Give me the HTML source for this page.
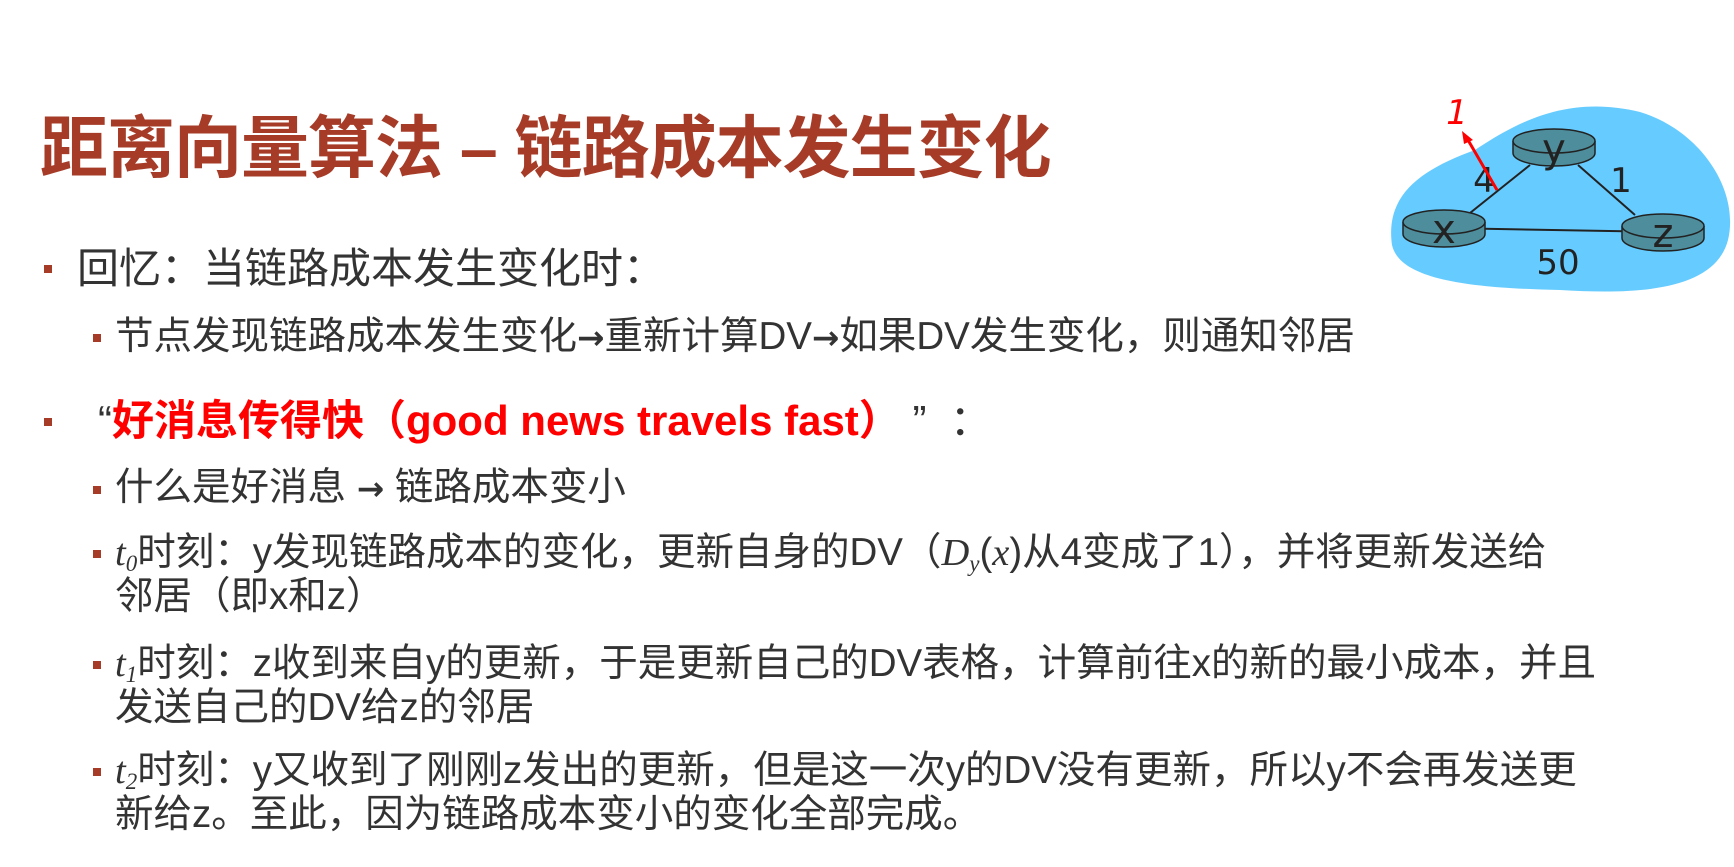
<!DOCTYPE html>
<html><head><meta charset="utf-8"><style>
body{margin:0;width:1734px;height:867px;background:#fff;position:relative;overflow:hidden;font-family:"Liberation Sans","Noto Sans CJK SC",sans-serif;color:#333}
.t{position:absolute;left:40px;top:93px;font-size:68px;font-weight:bold;color:#A63C28;white-space:nowrap;letter-spacing:-1px}
.l{position:absolute;white-space:nowrap;font-size:42px;line-height:44px}
.b{position:absolute;width:8px;height:8px;background:#A63C28}
.s{font-size:38.5px}
i{font-family:"Liberation Serif",serif}
sub{font-size:23px;font-style:italic;font-family:"Liberation Serif",serif;vertical-align:-6px;line-height:0}
.a{font-family:"DejaVu Sans",sans-serif;font-weight:bold;font-size:0.85em}
</style></head><body>
<div class="t">距离向量算法 – 链路成本发生变化</div>

<div class="b" style="left:44px;top:265px"></div>
<div class="l" style="left:77px;top:247px">回忆：当链路成本发生变化时：</div>
<div class="b" style="left:93px;top:334px"></div>
<div class="l s" style="left:115px;top:315px">节点发现链路成本发生变化<span class="a">→</span>重新计算DV<span class="a">→</span>如果DV发生变化，则通知邻居</div>

<div class="b" style="left:44px;top:418px"></div>
<div class="l" style="left:98px;top:399px"><span>“</span><b style="color:#f00">好消息传得快（good news travels fast）</b>&nbsp;”&nbsp;&nbsp;：</div>
<div class="b" style="left:93px;top:486px"></div>
<div class="l s" style="left:115px;top:466px">什么是好消息 <span class="a">→</span> 链路成本变小</div>

<div class="b" style="left:93px;top:550px"></div>
<div class="l s" style="left:115px;top:531px"><i>t</i><sub>0</sub>时刻：y发现链路成本的变化，更新自身的DV（<i>D<sub>y</sub></i>(<i>x</i>)从4变成了1），并将更新发送给<br>邻居（即x和z）</div>

<div class="b" style="left:93px;top:661px"></div>
<div class="l s" style="left:115px;top:642px"><i>t</i><sub>1</sub>时刻：z收到来自y的更新，于是更新自己的DV表格，计算前往x的新的最小成本，并且<br>发送自己的DV给z的邻居</div>

<div class="b" style="left:93px;top:768px"></div>
<div class="l s" style="left:115px;top:749px"><i>t</i><sub>2</sub>时刻：y又收到了刚刚z发出的更新，但是这一次y的DV没有更新，所以y不会再发送更<br>新给z。至此，因为链路成本变小的变化全部完成。</div>

<svg style="position:absolute;left:0;top:0" width="1734" height="867">
<path d="M1392 245 C1385 195 1420 170 1475 150 C1520 120 1570 95 1640 112 C1700 130 1740 190 1728 240 C1715 290 1640 295 1560 290 C1470 288 1400 280 1392 245 Z" fill="#66CCFF"/>
<line x1="1444" y1="228" x2="1663" y2="232" stroke="#222" stroke-width="2"/>
<line x1="1470" y1="213" x2="1530" y2="165" stroke="#222" stroke-width="2"/>
<line x1="1578" y1="165" x2="1635" y2="215" stroke="#222" stroke-width="2"/>
<g stroke="#222" stroke-width="1.5" fill="#4E8E9C">
<path d="M1513 141 v12 a41 13 0 0 0 82 0 v-12"/><ellipse cx="1554" cy="141" rx="41" ry="12"/>
<path d="M1403 222 v12 a41 13 0 0 0 82 0 v-12"/><ellipse cx="1444" cy="222" rx="41" ry="12"/>
<path d="M1622 226 v12 a41 13 0 0 0 82 0 v-12"/><ellipse cx="1663" cy="226" rx="41" ry="12"/>
</g>
<g font-family="DejaVu Sans,sans-serif" fill="#222" font-size="40" text-anchor="middle">
<text x="1554" y="162">y</text><text x="1444" y="243">x</text><text x="1663" y="247">z</text>
<text x="1484" y="192" font-size="34">4</text><text x="1621" y="192" font-size="34">1</text>
<text x="1558" y="274" font-size="34">50</text>
<text x="1457" y="124" font-size="34" fill="#f00" font-style="italic">1</text>
</g>
<line x1="1497" y1="190" x2="1468" y2="140" stroke="#f00" stroke-width="3"/>
<path d="M1462 131 L1473 140 L1464 144 Z" fill="#f00"/>
</svg>
</body></html>
